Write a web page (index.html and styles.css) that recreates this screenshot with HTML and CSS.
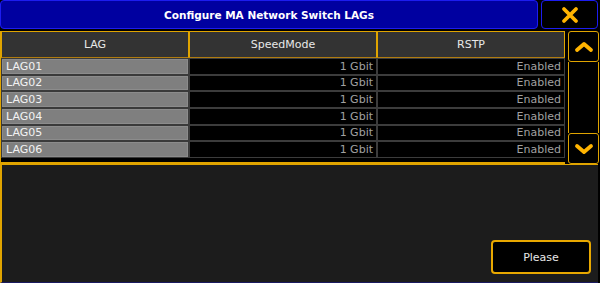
FILE: index.html
```html
<!DOCTYPE html>
<html lang="en">

<head>
    <meta charset="UTF-8">
    <meta name="viewport" content="width=device-width, initial-scale=1.0">
    <title>Configure MA Network Switch LAGs</title>
    <link rel="stylesheet" href="styles.css">
</head>

<body>
    <div class="window">
        <div class="titlebar">
            <div class="title">Configure MA Network Switch LAGs</div>
            <button class="close">
                <svg width="20" height="18" viewBox="0 0 20 18">
                    <path d="M4 3 L16 15 M16 3 L4 15" stroke="#ffb400" stroke-width="3.8" stroke-linecap="round" />
                </svg>
            </button>
        </div>

        <div class="main">
            <div class="grid">
                <div class="head">LAG</div>
                <div class="head">SpeedMode</div>
                <div class="head">RSTP</div>

                <div class="name">LAG01</div>
                <div class="cell">1 Gbit</div>
                <div class="cell">Enabled</div>

                <div class="name">LAG02</div>
                <div class="cell">1 Gbit</div>
                <div class="cell">Enabled</div>

                <div class="name">LAG03</div>
                <div class="cell">1 Gbit</div>
                <div class="cell">Enabled</div>

                <div class="name">LAG04</div>
                <div class="cell">1 Gbit</div>
                <div class="cell">Enabled</div>

                <div class="name">LAG05</div>
                <div class="cell">1 Gbit</div>
                <div class="cell">Enabled</div>

                <div class="name">LAG06</div>
                <div class="cell">1 Gbit</div>
                <div class="cell">Enabled</div>
            </div>

            <div class="scroll">
                <button class="arrow">
                    <svg width="20" height="12" viewBox="0 0 20 12">
                        <path d="M3 9 L10 3 L17 9" fill="none" stroke="#ffb400" stroke-width="3.8" stroke-linecap="round" stroke-linejoin="round" />
                    </svg>
                </button>
                <div class="track"></div>
                <button class="arrow">
                    <svg width="20" height="12" viewBox="0 0 20 12">
                        <path d="M3 3 L10 9 L17 3" fill="none" stroke="#ffb400" stroke-width="3.8" stroke-linecap="round" stroke-linejoin="round" />
                    </svg>
                </button>
            </div>
        </div>

        <div class="footer">
            <button class="please">Please</button>
        </div>
    </div>
</body>

</html>
```

FILE: styles.css
```css
body {
    margin: 0;
    background-color: #000;
    font-family: "DejaVu Sans", sans-serif;
    font-size: 11px;
}

.window {
    width: 600px;
    height: 283px;
    display: flex;
    flex-direction: column;
}

.titlebar {
    display: flex;
    height: 29px;
    gap: 3px;
    padding-right: 2px;
}

.title {
    flex: 1;
    background-color: #0000a0;
    border: 1px solid #1c1cf0;
    border-radius: 4px;
    color: #fff;
    font-size: 10.5px;
    font-weight: bold;
    display: flex;
    align-items: center;
    justify-content: center;
}

.close {
    width: 57px;
    background-color: #000;
    border: 1px solid #1c1cf0;
    border-radius: 4px;
    padding: 0;
    display: flex;
    align-items: center;
    justify-content: center;
}

.main {
    display: flex;
    margin-top: 2px;
    height: 133px;
}

.grid {
    width: 564px;
    border-left: 1px solid #e0a400;
    border-bottom: 2px solid #e0a400;
    display: grid;
    grid-template-columns: 188px 188px 188px;
    grid-template-rows: 27px repeat(6, 16.67px);
    align-content: start;
}

.head {
    background-color: #333;
    border: 1px solid #e0a400;
    border-bottom-color: #b07c10;
    color: #e8e8e8;
    display: flex;
    align-items: center;
    justify-content: center;
}

.name,
.cell {
    display: flex;
    align-items: center;
    box-sizing: border-box;
}

.name {
    background-color: #7f7f7f;
    border: 1px solid #3a3a3a;
    box-shadow: inset 0 0 0 1px #8c8c8c;
    color: #f2f2f2;
    padding-left: 4px;
}

.cell {
    background-color: #000;
    border: 1px solid #3c3c3c;
    color: #a0a0a0;
    justify-content: flex-end;
    padding-right: 3px;
}

.scroll {
    width: 31px;
    margin-left: 3px;
    display: flex;
    flex-direction: column;
}

.arrow {
    height: 31px;
    background-color: #000;
    border: 1px solid #e0a400;
    border-radius: 3px;
    padding: 0;
    display: flex;
    align-items: center;
    justify-content: center;
}

.track {
    flex: 1;
    border-left: 1px solid #e0a400;
    border-right: 1px solid #e0a400;
}

.footer {
    flex: 1;
    margin-right: 2px;
    background-color: #1c1c1c;
    border-top: 1px solid #e0a400;
    border-left: 2px solid #e0a400;
    border-bottom: 1px solid #1a1a60;
    display: flex;
    align-items: flex-end;
    justify-content: flex-end;
    padding: 0 7px 8px 0;
}

.please {
    width: 100px;
    height: 34px;
    background-color: #000;
    border: 2px solid #e8a800;
    border-radius: 4px;
    color: #e8e8e8;
    font-family: "DejaVu Sans", sans-serif;
    font-size: 11px;
}
```
